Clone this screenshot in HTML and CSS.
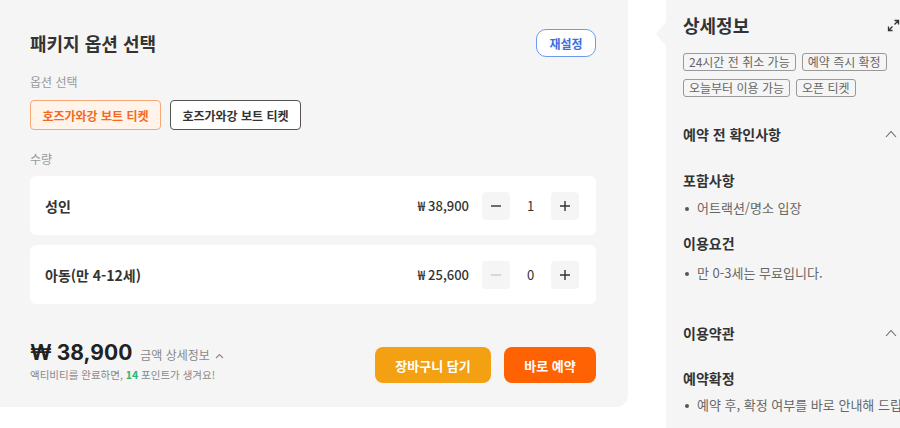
FILE: index.html
```html
<!DOCTYPE html>
<html lang="ko">
<head>
<meta charset="utf-8">
<link rel="stylesheet" href="styles.css">
</head>
<body>
<div class="page">
  <section class="options">
    <div class="opt-head">
      <h2 class="opt-title">패키지 옵션 선택</h2>
      <button class="reset">재설정</button>
    </div>
    <div class="label">옵션 선택</div>
    <div class="chips">
      <button class="chip chip-on">호즈가와강 보트 티켓</button>
      <button class="chip">호즈가와강 보트 티켓</button>
    </div>
    <div class="label label-qty">수량</div>
    <div class="rows">
      <div class="row">
        <span class="row-name">성인</span>
        <span class="row-price">₩ 38,900</span>
        <div class="stepper">
          <span class="step">
            <svg width="12" height="12" viewBox="0 0 12 12"><path d="M1 6h10" stroke="#333" stroke-width="1.4"/></svg>
          </span>
          <span class="count">1</span>
          <span class="step">
            <svg width="12" height="12" viewBox="0 0 12 12"><path d="M1 6h10M6 1v10" stroke="#333" stroke-width="1.4"/></svg>
          </span>
        </div>
      </div>
      <div class="row">
        <span class="row-name">아동(만 4-12세)</span>
        <span class="row-price">₩ 25,600</span>
        <div class="stepper">
          <span class="step">
            <svg width="12" height="12" viewBox="0 0 12 12"><path d="M1 6h10" stroke="#ccc" stroke-width="1.4"/></svg>
          </span>
          <span class="count">0</span>
          <span class="step">
            <svg width="12" height="12" viewBox="0 0 12 12"><path d="M1 6h10M6 1v10" stroke="#333" stroke-width="1.4"/></svg>
          </span>
        </div>
      </div>
    </div>
    <div class="footer">
      <div class="total">
        <div class="total-line">
          <span class="total-price">₩ 38,900</span>
          <span class="total-detail">금액 상세정보
            <svg width="9" height="6" viewBox="0 0 9 6"><path d="M1 5l3.5-3.5L8 5" fill="none" stroke="#888" stroke-width="1.1"/></svg>
          </span>
        </div>
        <div class="points">액티비티를 완료하면, <b>14</b> 포인트가 생겨요!</div>
      </div>
      <div class="actions">
        <button class="btn btn-cart">장바구니 담기</button>
        <button class="btn btn-book">바로 예약</button>
      </div>
    </div>
  </section>

  <aside class="detail">
    <div class="detail-head">
      <h2 class="detail-title">상세정보</h2>
      <svg class="expand" width="13" height="13" viewBox="0 0 13 13"><path d="M7.5 1.5h4v4M11.5 1.5L7.5 5.5M5.5 11.5h-4v-4M1.5 11.5l4-4" fill="none" stroke="#333" stroke-width="1.3"/></svg>
    </div>
    <div class="tags">
      <span class="tag">24시간 전 취소 가능</span>
      <span class="tag">예약 즉시 확정</span>
      <span class="tag">오늘부터 이용 가능</span>
      <span class="tag">오픈 티켓</span>
    </div>
    <div class="sec-head sec-first">
      <span>예약 전 확인사항</span>
      <svg width="12" height="8" viewBox="0 0 12 8"><path d="M1 7l5-5.5L11 7" fill="none" stroke="#666" stroke-width="1.1"/></svg>
    </div>
    <div class="sub">포함사항</div>
    <div class="bullet">어트랙션/명소 입장</div>
    <div class="sub sub-next">이용요건</div>
    <div class="bullet bullet-2">만 0-3세는 무료입니다.</div>
    <div class="sec-head sec-second">
      <span>이용약관</span>
      <svg width="12" height="8" viewBox="0 0 12 8"><path d="M1 7l5-5.5L11 7" fill="none" stroke="#666" stroke-width="1.1"/></svg>
    </div>
    <div class="sub sub-terms">예약확정</div>
    <div class="bullet bullet-3">예약 후, 확정 여부를 바로 안내해 드립니다.</div>
  </aside>
</div>
</body>
</html>
```

FILE: styles.css
```css
* { box-sizing: border-box; }
html, body { margin: 0; padding: 0; }
body {
  background: #fff;
  font-family: "Noto Sans CJK KR", "Noto Sans", sans-serif;
  color: #333;
  width: 900px;
  height: 428px;
  overflow: hidden;
}
button { font-family: inherit; cursor: pointer; }
.page {
  display: flex;
  align-items: flex-start;
  gap: 38px;
  width: 900px;
  height: 428px;
}

/* left panel */
.options {
  width: 628px;
  flex: none;
  height: 407px;
  background: #f5f5f5;
  border-bottom-right-radius: 12px;
  padding: 29px 32px 0 30px;
}
.opt-head {
  display: flex;
  align-items: center;
  justify-content: space-between;
  height: 28px;
}
.opt-title {
  margin: 0;
  font-size: 18px;
  font-weight: 700;
  color: #333;
  line-height: 26px;
}
.reset {
  width: 60px;
  height: 28px;
  border: 1px solid #6b9af0;
  background: #fff;
  border-radius: 10px;
  color: #3a6ee0;
  font-size: 12px;
  font-weight: 700;
  padding: 0;
}
.label {
  margin-top: 16px;
  font-size: 12px;
  line-height: 18px;
  color: #999;
}
.label-qty { margin-top: 20px; }
.chips {
  display: flex;
  gap: 9px;
  margin-top: 9px;
}
.chip {
  width: 131px;
  height: 30px;
  border: 1px solid #555;
  background: #fff;
  border-radius: 4px;
  font-size: 12px;
  font-weight: 700;
  color: #333;
  padding: 0;
}
.chip-on {
  border-color: #f6a977;
  background: #fff3ea;
  color: #f36a1d;
}
.rows {
  display: flex;
  flex-direction: column;
  gap: 10px;
  margin-top: 8px;
}
.row {
  display: flex;
  align-items: center;
  height: 59px;
  background: #fff;
  border-radius: 6px;
  padding: 0 17px 0 15px;
}
.row-name {
  flex: 1;
  font-size: 14px;
  font-weight: 700;
  color: #333;
}
.row-price {
  font-size: 13px;
  color: #333;
  font-weight: 500;
  margin-right: 13px;
}
.stepper {
  display: flex;
  align-items: center;
}
.step {
  width: 28px;
  height: 28px;
  background: #f5f5f5;
  border-radius: 4px;
  display: flex;
  align-items: center;
  justify-content: center;
}
.count {
  width: 41px;
  text-align: center;
  font-size: 13px;
  color: #333;
}
.footer {
  display: flex;
  align-items: flex-end;
  justify-content: space-between;
  margin-top: 36px;
}
.total-line {
  display: flex;
  align-items: baseline;
  gap: 8px;
}
.total-price {
  font-size: 21px;
  font-weight: 700;
  color: #222;
  line-height: 26px;
  font-family: "Inter", "Noto Sans CJK KR", sans-serif;
}
.total-detail {
  font-size: 12px;
  color: #888;
}
.total-detail svg { margin-left: 2px; vertical-align: 1px; }
.points {
  font-size: 10.5px;
  color: #888;
  line-height: 16px;
  margin-top: 1px;
}
.points b { color: #2bb673; font-weight: 700; }
.actions {
  display: flex;
  gap: 13px;
}
.btn {
  height: 36px;
  border: none;
  border-radius: 8px;
  color: #fff;
  font-size: 13px;
  font-weight: 700;
  padding: 0;
}
.btn-cart { width: 116px; background: #f3a013; }
.btn-book { width: 92px; background: #ff6202; }

/* right panel */
.detail {
  position: relative;
  flex: none;
  width: 234px;
  min-width: 0;
  height: 428px;
  background: #f5f5f5;
  padding: 12px 0 0 17px;
  white-space: nowrap;
}
.detail::before {
  content: "";
  position: absolute;
  left: -10px;
  top: 22px;
  border-style: solid;
  border-width: 12px 10px 12px 0;
  border-color: transparent #f5f5f5 transparent transparent;
}
.detail-head {
  display: flex;
  align-items: center;
  justify-content: space-between;
}
.detail-title {
  margin: 0;
  font-size: 18px;
  font-weight: 700;
  line-height: 26px;
  color: #333;
}
.expand { margin-right: 0; }
.tags {
  display: flex;
  flex-wrap: wrap;
  gap: 8px 6px;
  margin-top: 15px;
  width: 210px;
}
.tag {
  height: 18px;
  border: 1px solid #999;
  border-radius: 3px;
  padding: 0 5px;
  font-size: 12px;
  line-height: 16px;
  color: #666;
}
.sec-head {
  display: flex;
  align-items: center;
  justify-content: space-between;
  font-size: 14px;
  font-weight: 700;
  line-height: 22px;
  color: #333;
  padding-right: 3px;
}
.sec-first { margin-top: 26px; }
.sec-second { margin-top: 39px; }
.sub {
  font-size: 14px;
  font-weight: 700;
  line-height: 22px;
  color: #333;
  margin-top: 24px;
}
.sub-next { margin-top: 14px; }
.sub-terms { margin-top: 23px; }
.bullet {
  position: relative;
  font-size: 13px;
  line-height: 20px;
  color: #666;
  padding-left: 14px;
  margin-top: 7px;
  overflow: hidden;
}
.bullet::before {
  content: "";
  position: absolute;
  left: 2px;
  top: 9px;
  width: 4px;
  height: 4px;
  border-radius: 50%;
  background: #555;
}
.bullet-2 { margin-top: 9px; }
.bullet-3 { margin-top: 6px; }
```
